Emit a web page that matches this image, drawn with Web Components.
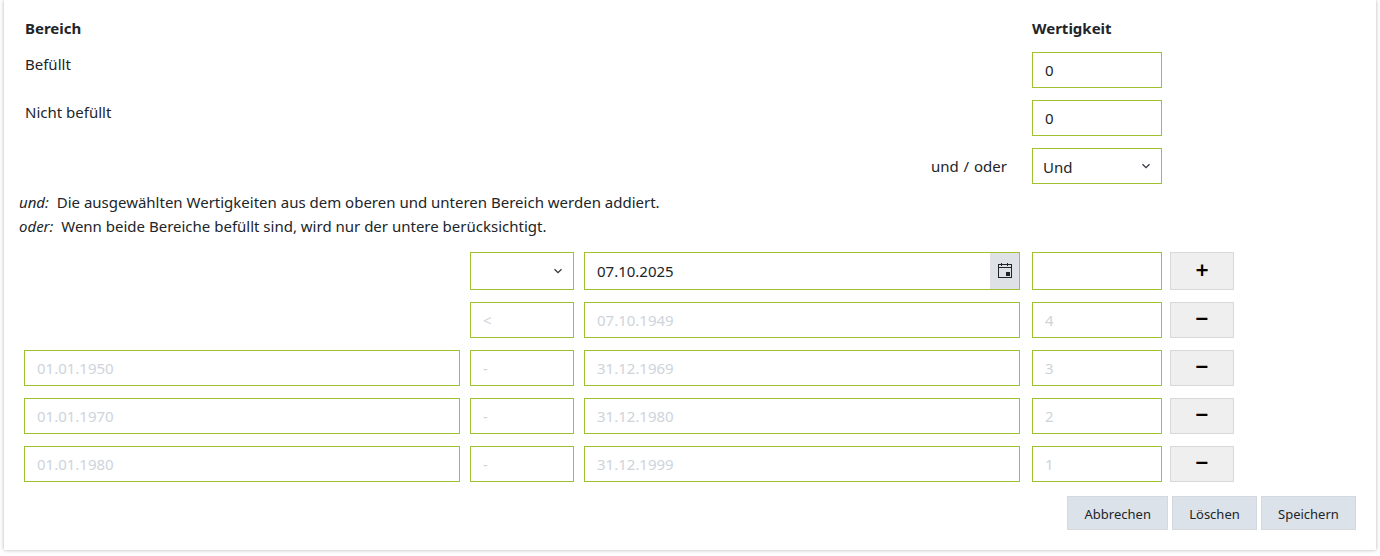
<!DOCTYPE html>
<html lang="de">
<head>
<meta charset="utf-8">
<title>Wertigkeit</title>
<style>
	html, body { margin: 0; background: #fff; height: 100%; }
	body { font-family: "Noto Sans", "Open Sans", sans-serif; font-size: 15px; color: #212529; }
</style>
</head>
<body>
<score-panel>
	<score-row class="head">
		<b slot="name" class="label">Bereich</b>
		<b slot="score">Wertigkeit</b>
	</score-row>
	<score-row>
		<span slot="name" class="lift label">Befüllt</span>
		<text-box slot="score">0</text-box>
	</score-row>
	<score-row>
		<span slot="name" class="lift label">Nicht befüllt</span>
		<text-box slot="score">0</text-box>
	</score-row>
	<score-row class="last">
		<span slot="date" class="conj">und / oder</span>
		<select-box slot="score">Und</select-box>
	</score-row>
	<score-note>
		<div><i>und:</i>&nbsp; Die ausgewählten Wertigkeiten aus dem oberen und unteren Bereich werden addiert.</div>
		<div><i>oder:</i>&nbsp; Wenn beide Bereiche befüllt sind, wird nur der untere berücksichtigt.</div>
	</score-note>
	<score-row>
		<select-box slot="op" tall></select-box>
		<date-box slot="date">07.10.2025</date-box>
		<text-box slot="score" tall></text-box>
		<icon-button slot="action" tall>+</icon-button>
	</score-row>
	<score-row>
		<text-box slot="op" off>&lt;</text-box>
		<text-box slot="date" off>07.10.1949</text-box>
		<text-box slot="score" off>4</text-box>
		<icon-button slot="action">−</icon-button>
	</score-row>
	<score-row>
		<text-box slot="name" off>01.01.1950</text-box>
		<text-box slot="op" off>-</text-box>
		<text-box slot="date" off>31.12.1969</text-box>
		<text-box slot="score" off>3</text-box>
		<icon-button slot="action">−</icon-button>
	</score-row>
	<score-row>
		<text-box slot="name" off>01.01.1970</text-box>
		<text-box slot="op" off>-</text-box>
		<text-box slot="date" off>31.12.1980</text-box>
		<text-box slot="score" off>2</text-box>
		<icon-button slot="action">−</icon-button>
	</score-row>
	<score-row>
		<text-box slot="name" off>01.01.1980</text-box>
		<text-box slot="op" off>-</text-box>
		<text-box slot="date" off>31.12.1999</text-box>
		<text-box slot="score" off>1</text-box>
		<icon-button slot="action">−</icon-button>
	</score-row>
	<button-bar>
		<form-button>Abbrechen</form-button>
		<form-button>Löschen</form-button>
		<form-button>Speichern</form-button>
	</button-bar>
</score-panel>

<script>
const fieldStyle = `
	:host {
		display: flex;
		align-items: center;
		box-sizing: border-box;
		height: 36px;
		border: 1px solid #9fc131;
		background: #fff;
		font-size: 15px;
		line-height: 20px;
		color: #212529;
	}
	:host([tall]) { height: 38px; }
	.value { flex: 1; padding-left: 12px; white-space: nowrap; }
`;

class ScorePanel extends HTMLElement {
	constructor() {
		super();
		this.attachShadow({ mode: "open" });
		this.shadowRoot.innerHTML = `
			<style>
				:host {
					display: block;
					box-sizing: border-box;
					width: 1372px;
					height: 550px;
					margin-left: 4px;
					padding: 18px 20px 0;
					background: #fff;
					box-shadow: 0 0 4px rgba(0, 0, 0, 0.3);
				}
			</style>
			<slot></slot>
		`;
	}
}

class ScoreRow extends HTMLElement {
	constructor() {
		super();
		this.attachShadow({ mode: "open" });
		this.shadowRoot.innerHTML = `
			<style>
				:host {
					display: grid;
					grid-template-columns: 436px 10px 104px 10px 436px 12px 130px 8px 64px;
					margin-bottom: 12px;
					line-height: 20px;
				}
				:host(.head) { margin-bottom: 14px; }
				:host(.last) { margin-bottom: 6px; }
				slot { display: block; }
				slot[name=name] { grid-column: 1; }
				slot[name=op] { grid-column: 3; }
				slot[name=date] { grid-column: 5; }
				slot[name=score] { grid-column: 7; }
				slot[name=action] { grid-column: 9; }
				::slotted(.label) { margin-left: 1px; }
				::slotted(.lift) { display: block; margin-top: 2px; }
				::slotted(.conj) { display: block; margin-top: 8px; margin-right: 13px; text-align: right; word-spacing: 1px; }
				::slotted(b) { display: block; font-weight: 700; }
			</style>
			<slot name="name"></slot>
			<slot name="op"></slot>
			<slot name="date"></slot>
			<slot name="score"></slot>
			<slot name="action"></slot>
		`;
	}
}

class ScoreNote extends HTMLElement {
	constructor() {
		super();
		this.attachShadow({ mode: "open" });
		this.shadowRoot.innerHTML = `
			<style>
				:host {
					display: block;
					margin: 0 0 14px -5px;
					line-height: 24px;
				}
			</style>
			<slot></slot>
		`;
	}
}

class TextBox extends HTMLElement {
	constructor() {
		super();
		this.attachShadow({ mode: "open" });
		this.shadowRoot.innerHTML = `
			<style>
				${fieldStyle}
				:host([off]) { color: #ced4da; }
			</style>
			<span class="value"><slot></slot></span>
		`;
	}
}

class SelectBox extends HTMLElement {
	constructor() {
		super();
		this.attachShadow({ mode: "open" });
		this.shadowRoot.innerHTML = `
			<style>
				${fieldStyle}
				.value { padding: 1px 0 0 10px; }
				svg { margin-right: 10px; }
			</style>
			<span class="value"><slot></slot></span>
			<svg width="10" height="6" viewBox="0 0 10 6" fill="none" stroke="#343a40" stroke-width="1.3">
				<path d="M1.5 1.2 5 4.7l3.5-3.5"/>
			</svg>
		`;
	}
}

class DateBox extends HTMLElement {
	constructor() {
		super();
		this.attachShadow({ mode: "open" });
		this.shadowRoot.innerHTML = `
			<style>
				${fieldStyle}
				:host { height: 38px; align-items: stretch; }
				.value { align-self: center; }
				.pick {
					display: flex;
					align-items: center;
					justify-content: center;
					width: 29px;
					background: #dee2e6;
				}
			</style>
			<span class="value"><slot></slot></span>
			<span class="pick">
				<svg width="15" height="16" viewBox="0 0 15 16" fill="none" stroke="#212529" stroke-width="1">
					<rect x="1.5" y="1.5" width="13" height="13"/>
					<path d="M2 4.5h12M4.5 0v3M10.5 0v3"/>
					<rect x="9" y="9" width="4" height="4" fill="#212529" stroke="none"/>
				</svg>
			</span>
		`;
	}
}

class IconButton extends HTMLElement {
	constructor() {
		super();
		this.attachShadow({ mode: "open" });
		this.shadowRoot.innerHTML = `
			<style>
				:host {
					display: flex;
					align-items: center;
					justify-content: center;
					box-sizing: border-box;
					height: 36px;
					padding-bottom: 4px;
					border: 1px solid #d9d9d9;
					background: #efefef;
					color: #000;
					font-size: 23px;
					font-weight: 600;
					line-height: 1;
					cursor: pointer;
				}
				:host([tall]) { height: 38px; padding-bottom: 2px; }
			</style>
			<slot></slot>
		`;
	}
}

class ButtonBar extends HTMLElement {
	constructor() {
		super();
		this.attachShadow({ mode: "open" });
		this.shadowRoot.innerHTML = `
			<style>
				:host {
					display: flex;
					justify-content: flex-end;
					gap: 4px;
					margin-top: 14px;
				}
			</style>
			<slot></slot>
		`;
	}
}

class FormButton extends HTMLElement {
	constructor() {
		super();
		this.attachShadow({ mode: "open" });
		this.shadowRoot.innerHTML = `
			<style>
				:host {
					display: flex;
					align-items: center;
					box-sizing: border-box;
					height: 34px;
					padding: 1px 16.15px 0;
					border: 1px solid #d5d8dc;
					background: #dce2e9;
					font-size: 13px;
					cursor: pointer;
				}
			</style>
			<slot></slot>
		`;
	}
}

customElements.define("score-panel", ScorePanel);
customElements.define("score-row", ScoreRow);
customElements.define("score-note", ScoreNote);
customElements.define("text-box", TextBox);
customElements.define("select-box", SelectBox);
customElements.define("date-box", DateBox);
customElements.define("icon-button", IconButton);
customElements.define("button-bar", ButtonBar);
customElements.define("form-button", FormButton);
</script>
</body>
</html>
